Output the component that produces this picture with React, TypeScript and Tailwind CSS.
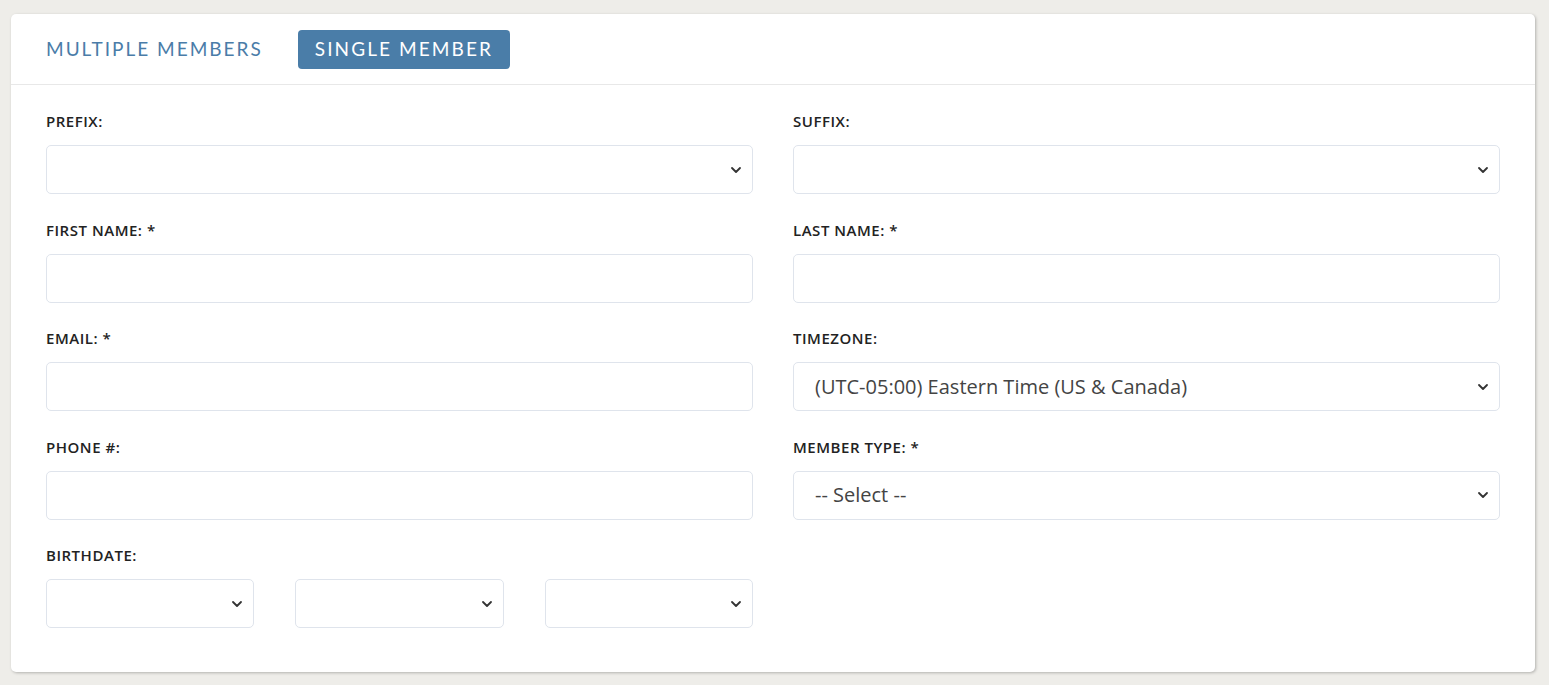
import { ChevronDown } from 'lucide-react';

function Field({ label, value, select }: { label: string; value?: string; select?: boolean }) {
  return (
    <div className="flex flex-col">
      <label className="mb-[14px] text-[15px] font-semibold leading-[20px] tracking-[0.035em] text-[#222]">{label}</label>
      <Box value={value} select={select} />
    </div>
  );
}

function Box({ value, select }: { value?: string; select?: boolean }) {
  return (
    <div className="relative flex h-[49px] items-center rounded-[5px] border border-[#dfe4ec] bg-white px-[21px]">
      <span className="text-[20px] text-[#444]">{value}</span>
      {select && (
        <ChevronDown className="absolute right-[8px] top-1/2 h-[16px] w-[16px] -translate-y-1/2 text-[#333]" strokeWidth={2.75} />
      )}
    </div>
  );
}

export default function App() {
  return (
    <div className="min-h-screen bg-[#eeede9] pl-[11px] pr-[14px] pt-[14px] pb-[13px]" style={{ fontFamily: '"Open Sans", sans-serif' }}>
      <div className="rounded-[5px] bg-white shadow-[1px_1px_3px_rgba(0,0,0,0.25)]">
        <div className="flex h-[71px] items-center gap-[35px] border-b border-[#e8e8e8] px-[35px]" style={{ fontFamily: 'Lato, sans-serif' }}>
          <button className="text-[19px] tracking-[0.105em] text-[#4a7ca8]">MULTIPLE MEMBERS</button>
          <button className="flex h-[39px] items-center rounded-[4px] bg-[#4a7da8] px-[17px] text-[19px] tracking-[0.11em] text-white">
            SINGLE MEMBER
          </button>
        </div>
        <div className="grid grid-cols-2 gap-x-[40px] gap-y-[25.5px] px-[35px] pt-[26px] pb-[44px]">
          <Field label="PREFIX:" select />
          <Field label="SUFFIX:" select />
          <Field label="FIRST NAME: *" />
          <Field label="LAST NAME: *" />
          <Field label="EMAIL: *" />
          <Field label="TIMEZONE:" value="(UTC-05:00) Eastern Time (US & Canada)" select />
          <Field label="PHONE #:" />
          <Field label="MEMBER TYPE: *" value="-- Select --" select />
          <div className="flex flex-col">
            <label className="mb-[14px] text-[15px] font-semibold leading-[20px] tracking-[0.035em] text-[#222]">BIRTHDATE:</label>
            <div className="grid grid-cols-3 gap-x-[41px]">
              <Box select />
              <Box select />
              <Box select />
            </div>
          </div>
        </div>
      </div>
    </div>
  );
}
